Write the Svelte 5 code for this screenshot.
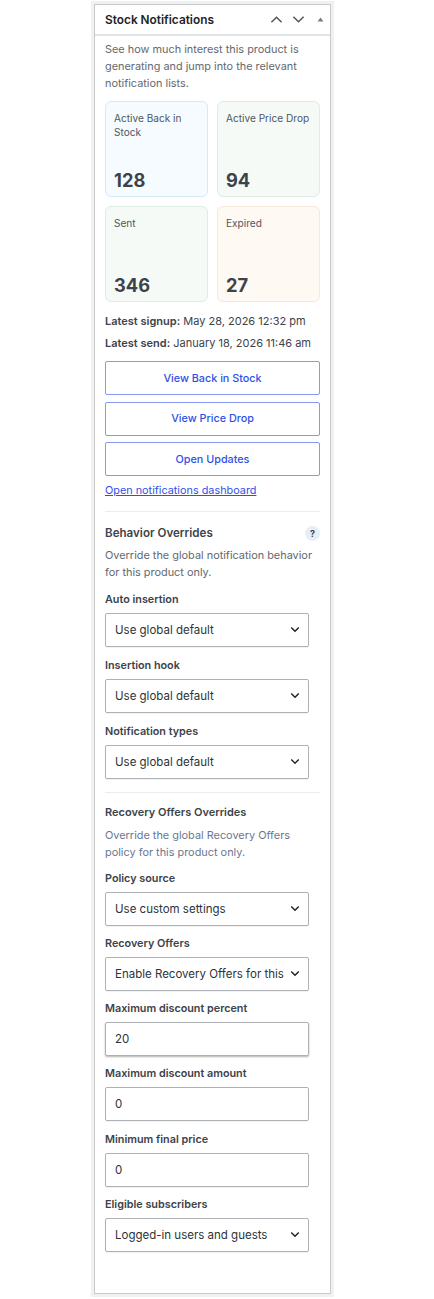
<script lang="ts">
	let stats = [
		{ label: 'Active Back in Stock', value: 128, tone: 'blue' },
		{ label: 'Active Price Drop', value: 94, tone: 'green' },
		{ label: 'Sent', value: 346, tone: 'green' },
		{ label: 'Expired', value: 27, tone: 'orange' }
	];

	let actions = ['View Back in Stock', 'View Price Drop', 'Open Updates'];

	let behavior = [
		{ label: 'Auto insertion', value: 'Use global default' },
		{ label: 'Insertion hook', value: 'Use global default' },
		{ label: 'Notification types', value: 'Use global default' }
	];
</script>

{#snippet dropdown(label: string, value: string)}
	<div class="field">
		<label>
			<span class="field-label">{label}</span>
			<span class="select-wrap">
				<select>
					<option>{value}</option>
				</select>
				<svg class="chevron" viewBox="0 0 12 8" aria-hidden="true">
					<path d="M1.5 1.5 6 6l4.5-4.5" />
				</svg>
			</span>
		</label>
	</div>
{/snippet}

{#snippet numberField(label: string, value: string, shadow = false)}
	<div class="field">
		<label>
			<span class="field-label">{label}</span>
			<input class:shadow type="text" {value} />
		</label>
	</div>
{/snippet}

<div class="page">
	<section class="postbox">
		<header class="postbox-header">
			<h2>Stock Notifications</h2>
			<div class="handles">
				<svg viewBox="0 0 14 9" class="handle"><path d="M1.5 7.5 7 2l5.5 5.5" /></svg>
				<svg viewBox="0 0 14 9" class="handle"><path d="M1.5 1.5 7 7l5.5-5.5" /></svg>
				<svg viewBox="0 0 8 6" class="caret"><path d="M4 0.5 7.5 5.5h-7z" /></svg>
			</div>
		</header>

		<div class="inside">
			<p class="muted">See how much interest this product is generating and jump into the relevant notification lists.</p>

			<div class="stats">
				{#each stats as stat}
					<div class="stat {stat.tone}">
						<span class="stat-label">{stat.label}</span>
						<strong>{stat.value}</strong>
					</div>
				{/each}
			</div>

			<p class="meta"><b>Latest signup:</b> May 28, 2026 12:32 pm</p>
			<p class="meta"><b>Latest send:</b> January 18, 2026 11:46 am</p>

			<div class="actions">
				{#each actions as action}
					<button type="button">{action}</button>
				{/each}
			</div>
			<a class="dash-link" href="#dashboard">Open notifications dashboard</a>

			<hr class="first-rule" />

			<div class="title-row">
				<h3>Behavior Overrides</h3>
				<span class="help">?</span>
			</div>
			<p class="muted sub">Override the global notification behavior for this product only.</p>

			<div class="group-behavior">
				{#each behavior as item}
					{@render dropdown(item.label, item.value)}
				{/each}
			</div>

			<hr class="second-rule" />

			<h3 class="small">Recovery Offers Overrides</h3>
			<p class="muted sub recovery">Override the global Recovery Offers policy for this product only.</p>

			<div class="group-recovery">
				{@render dropdown('Policy source', 'Use custom settings')}
				{@render dropdown('Recovery Offers', 'Enable Recovery Offers for this product')}
				{@render numberField('Maximum discount percent', '20', true)}
				{@render numberField('Maximum discount amount', '0')}
				{@render numberField('Minimum final price', '0')}
				{@render dropdown('Eligible subscribers', 'Logged-in users and guests')}
			</div>
		</div>
	</section>
</div>

<style>
	:global(body) {
		margin: 0;
		background: #fff;
	}

	.page {
		width: 434px;
		height: 1299px;
		box-sizing: border-box;
		padding: 4px 0 0 94px;
		font-family: Inter, 'Liberation Sans', sans-serif;
		color: #3c434a;
	}

	.postbox {
		width: 237px;
		height: 1290px;
		box-sizing: border-box;
		background: #fff;
		border: 1px solid #c9cacc;
		box-shadow: 0 0 0 3px #f1f1f2;
	}

	.postbox-header {
		display: flex;
		align-items: center;
		justify-content: space-between;
		box-sizing: border-box;
		height: 31px;
		padding: 0 6px 0 10px;
		border-bottom: 2px solid #e2e3e4;
	}

	h2 {
		margin: 0;
		font-size: 11.85px;
		font-weight: 600;
		color: #1d2327;
	}

	.handles {
		display: flex;
		align-items: center;
	}

	.handle {
		width: 13px;
		height: 9px;
		margin-right: 9px;
		fill: none;
		stroke: #50575e;
		stroke-width: 1.6;
	}

	.caret {
		width: 7px;
		height: 5px;
		margin-left: 3px;
		fill: #787c82;
	}

	.inside {
		padding: 5px 10px 0;
	}

	p {
		margin: 0;
	}

	.muted {
		font-size: 10.9px;
		line-height: 16.8px;
		color: #646970;
	}

	.stats {
		display: grid;
		grid-template-columns: 103px 103px;
		grid-template-rows: 96px 96px;
		gap: 9px;
		margin-top: 10px;
		margin-bottom: 11px;
	}

	.stat {
		display: flex;
		flex-direction: column;
		justify-content: space-between;
		box-sizing: border-box;
		padding: 9px 8px 4px;
		border: 1px solid;
		border-radius: 6px;
	}

	.blue {
		background: #f6fbff;
		border-color: #d7e8f8;
	}

	.green {
		background: #f5faf7;
		border-color: #dfece5;
	}

	.orange {
		background: #fff9f3;
		border-color: #f6e9da;
	}

	.stat-label {
		font-size: 10.1px;
		line-height: 14px;
		color: #50575e;
	}

	.stat strong {
		font-size: 18.3px;
		line-height: 24px;
		font-weight: 700;
		color: #3c434a;
	}

	.meta {
		font-size: 11px;
		line-height: 16px;
		margin-bottom: 6px;
		color: #3c434a;
	}

	.meta b {
		font-weight: 600;
	}

	.actions {
		display: flex;
		flex-direction: column;
		gap: 6.5px;
		margin-top: 10px;
	}

	button {
		height: 34px;
		padding: 0;
		background: #fff;
		border: 1px solid #8797f4;
		border-radius: 2px;
		color: #2f50e8;
		font: 500 10.8px Inter, 'Liberation Sans', sans-serif;
	}

	.dash-link {
		display: block;
		margin-top: 6px;
		font-size: 10.85px;
		line-height: 16px;
		color: #2f50e8;
	}

	hr {
		margin: 0;
		border: 0;
		border-top: 1px solid #ececee;
	}

	.first-rule {
		margin-top: 13px;
	}

	.second-rule {
		margin-top: 13px;
	}

	.title-row {
		display: flex;
		align-items: center;
		justify-content: space-between;
		margin-top: 13px;
	}

	h3 {
		margin: 0;
		font-size: 11.6px;
		line-height: 16px;
		font-weight: 600;
		color: #3c434a;
	}

	h3.small {
		margin-top: 11px;
		font-size: 11px;
	}

	.help {
		display: grid;
		place-items: center;
		width: 15px;
		height: 15px;
		border-radius: 50%;
		background: #e8eef7;
		font-size: 9px;
		font-weight: 700;
		color: #3c434a;
	}

	.sub {
		margin-top: 6px;
	}

	.recovery {
		margin-top: 7px;
		color: #6b7790;
	}

	.group-behavior .field {
		margin-top: 11px;
	}

	.group-recovery .field {
		margin-top: 10.2px;
	}

	.field label {
		display: block;
	}

	.field-label {
		display: block;
		margin-bottom: 6px;
		font-size: 10.8px;
		line-height: 15px;
		font-weight: 600;
		color: #3c434a;
	}

	.select-wrap {
		position: relative;
		display: block;
		width: 204px;
	}

	select,
	input {
		display: block;
		box-sizing: border-box;
		width: 204px;
		height: 34px;
		margin: 0;
		background: #fff;
		border: 1px solid #aeb2b6;
		border-radius: 2px;
		font: 400 11.5px Inter, 'Liberation Sans', sans-serif;
		color: #2c3338;
		outline: none;
		box-shadow: 0 1px 1px rgba(0, 0, 0, 0.06);
	}

	select {
		appearance: none;
		padding: 0 24px 0 9px;
	}

	input {
		padding: 0 9px;
	}

	input.shadow {
		box-shadow: 0 1px 2px rgba(0, 0, 0, 0.3);
	}

	.chevron {
		position: absolute;
		right: 9px;
		top: 13px;
		width: 10px;
		height: 7px;
		fill: none;
		stroke: #1d2327;
		stroke-width: 1.7;
		pointer-events: none;
	}
</style>
